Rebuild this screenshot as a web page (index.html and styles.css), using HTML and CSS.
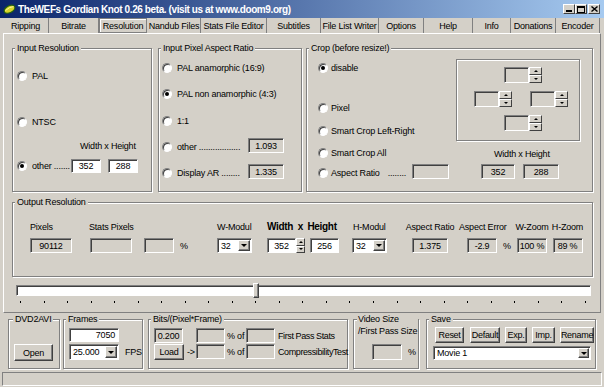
FILE: index.html
```html
<!DOCTYPE html>
<html lang="en">
<head>
    <meta charset="UTF-8">
    <meta name="viewport" content="width=device-width, initial-scale=1.0">
    <title>TheWEFs Gordian Knot</title>
    <link rel="stylesheet" href="styles.css">
</head>
<body>
<div class="window">
    <div class="titlebar">
        <svg class="app-icon" viewBox="0 0 13 12">
            <ellipse cx="6.5" cy="6.2" rx="5.8" ry="3.4" transform="rotate(-28 6.5 6.2)" fill="#d6d42a" stroke="#25600f" stroke-width="1.2"/>
            <path d="M2.5 7.5 Q6 4 10.5 3.6" stroke="#f6f4a0" stroke-width="1" fill="none"/>
        </svg>
        <span class="title">TheWEFs Gordian Knot 0.26 beta. (visit us at www.doom9.org)</span>
        <div class="caption-buttons">
            <span class="cap-btn"><svg width="6" height="6"><rect x="0" y="4" width="6" height="2" fill="#000"/></svg></span>
            <span class="cap-btn"><svg width="8" height="7"><rect x="0.5" y="0.5" width="7" height="6" fill="none" stroke="#000"/><rect x="0" y="0" width="8" height="2" fill="#000"/></svg></span>
            <span class="cap-btn close"><svg width="7" height="6"><path d="M0.5 0.5 L6.5 5.5 M6.5 0.5 L0.5 5.5" stroke="#000" stroke-width="1.4"/></svg></span>
        </div>
    </div>

    <div class="tabs">
        <span class="tab">Ripping</span>
        <span class="tab">Bitrate</span>
        <span class="tab active">Resolution</span>
        <span class="tab">Nandub Files</span>
        <span class="tab">Stats File Editor</span>
        <span class="tab">Subtitles</span>
        <span class="tab">File List Writer</span>
        <span class="tab">Options</span>
        <span class="tab">Help</span>
        <span class="tab">Info</span>
        <span class="tab">Donations</span>
        <span class="tab">Encoder</span>
    </div>

    <div class="page">
        <div class="top-row">
            <!-- input resolution -->
            <div class="group input-res">
                <div class="group-title">Input Resolution</div>
                <div class="row ir-pal"><span class="radio"></span>PAL</div>
                <div class="row ir-ntsc"><span class="radio"></span>NTSC</div>
                <div class="ir-label">Width x Height</div>
                <div class="row ir-other">
                    <span class="radio on"></span>
                    <span class="ir-other-text">other .......</span>
                    <span class="box edit ir-box">352</span>
                    <span class="box edit ir-box">288</span>
                </div>
            </div>

            <!-- input pixel aspect ratio -->
            <div class="group aspect">
                <div class="group-title">Input Pixel Aspect Ratio</div>
                <div class="row ar-1"><span class="radio"></span>PAL anamorphic (16:9)</div>
                <div class="row ar-2"><span class="radio on"></span>PAL non anamorphic (4:3)</div>
                <div class="row ar-3"><span class="radio"></span>1:1</div>
                <div class="row boxed ar-4">
                    <span class="radio-item"><span class="radio"></span>other ..................</span>
                    <span class="box sunken ar-box">1.093</span>
                </div>
                <div class="row boxed ar-5">
                    <span class="radio-item"><span class="radio"></span>Display AR ........</span>
                    <span class="box sunken ar-box">1.335</span>
                </div>
            </div>

            <!-- crop -->
            <div class="group crop">
                <div class="group-title">Crop (before resize!)</div>
                <div class="crop-body">
                    <div class="crop-left">
                        <div class="row cr-1"><span class="radio on"></span>disable</div>
                        <div class="row cr-2"><span class="radio"></span>Pixel</div>
                        <div class="row cr-3"><span class="radio"></span>Smart Crop Left-Right</div>
                        <div class="row cr-4"><span class="radio"></span>Smart Crop All</div>
                        <div class="row boxed cr-5">
                            <span class="radio-item"><span class="radio"></span>Aspect Ratio <span class="dots">........</span></span>
                            <span class="box sunken cr-box"></span>
                        </div>
                    </div>
                    <div class="crop-right">
                        <div class="crop-frame">
                            <div class="spinner sp-top"><span class="box sunken sp-field"></span><span class="spin"><span class="spin-btn up"></span><span class="spin-btn down"></span></span></div>
                            <div class="sp-mid">
                                <div class="spinner sp-left"><span class="box sunken sp-field"></span><span class="spin"><span class="spin-btn up"></span><span class="spin-btn down"></span></span></div>
                                <div class="spinner sp-right"><span class="box sunken sp-field"></span><span class="spin"><span class="spin-btn up"></span><span class="spin-btn down"></span></span></div>
                            </div>
                            <div class="spinner sp-bottom"><span class="box sunken sp-field"></span><span class="spin"><span class="spin-btn up"></span><span class="spin-btn down"></span></span></div>
                        </div>
                        <div class="crop-label">Width x Height</div>
                        <div class="crop-boxes">
                            <span class="box sunken cb-w">352</span>
                            <span class="box sunken cb-h">288</span>
                        </div>
                    </div>
                </div>
            </div>
        </div>

        <!-- output resolution -->
        <div class="group output">
            <div class="group-title">Output Resolution</div>
            <div class="out-row">
                <div class="cell c-pixels">
                    <span class="lbl">Pixels</span>
                    <div class="ctl"><span class="box sunken w42">90112</span></div>
                </div>
                <div class="cell c-stats">
                    <span class="lbl">Stats Pixels</span>
                    <div class="ctl"><span class="box sunken w42 ml1"></span></div>
                </div>
                <div class="cell c-pct">
                    <span class="lbl"></span>
                    <div class="ctl"><span class="box sunken w30"></span><span class="pct">%</span></div>
                </div>
                <div class="cell c-wmod">
                    <span class="lbl">W-Modul</span>
                    <div class="ctl">
                        <span class="combo w35"><span class="combo-text">32</span><span class="combo-btn"><i class="tri"></i></span></span>
                    </div>
                </div>
                <div class="cell c-wh">
                    <span class="lbl bold">Width x Height</span>
                    <div class="ctl">
                        <span class="box edit w29">352</span>
                        <span class="spin narrow"><span class="spin-btn up"></span><span class="spin-btn down"></span></span>
                        <span class="box edit w29 ml5">256</span>
                    </div>
                </div>
                <div class="cell c-hmod">
                    <span class="lbl ml1">H-Modul</span>
                    <div class="ctl">
                        <span class="combo w35"><span class="combo-text">32</span><span class="combo-btn"><i class="tri"></i></span></span>
                    </div>
                </div>
                <div class="cell c-ar center">
                    <span class="lbl">Aspect Ratio</span>
                    <div class="ctl"><span class="box sunken w36">1.375</span></div>
                </div>
                <div class="cell c-err">
                    <span class="lbl">Aspect Error</span>
                    <div class="ctl ml8"><span class="box sunken w30">-2.9</span><span class="pct">%</span></div>
                </div>
                <div class="cell c-wz center">
                    <span class="lbl">W-Zoom</span>
                    <div class="ctl"><span class="box sunken w30">100 %</span></div>
                </div>
                <div class="cell c-hz center">
                    <span class="lbl">H-Zoom</span>
                    <div class="ctl"><span class="box sunken w30">89 %</span></div>
                </div>
            </div>
        </div>

        <div class="slider">
            <span class="thumb"></span>
        </div>
        <div class="ticks">
            <i></i><i></i><i></i><i></i><i></i><i></i><i></i><i></i><i></i><i></i>
            <i></i><i></i><i></i><i></i><i></i><i></i><i></i><i></i><i></i><i></i>
            <i></i><i></i><i></i><i></i><i></i>
        </div>
    </div>

    <div class="bottom-row">
        <div class="group g-dvd">
            <div class="group-title">DVD2AVI</div>
            <span class="btn open-btn">Open</span>
        </div>
        <div class="group g-frames">
            <div class="group-title">Frames</div>
            <span class="box edit frames-box">7050</span>
            <div class="fps-row">
                <span class="combo fps-combo"><span class="combo-text">25.000</span><span class="combo-btn"><i class="tri"></i></span></span>
                <span>FPS</span>
            </div>
        </div>
        <div class="group g-bits">
            <div class="group-title">Bits/(Pixel*Frame)</div>
            <div class="bits-row first">
                <span class="box sunken bits-val">0.200</span>
                <span class="arrow"></span>
                <span class="box sunken w29"></span>
                <span class="pct-of">% of</span>
                <span class="box sunken w29"></span>
                <span class="bits-text">First Pass Stats</span>
            </div>
            <div class="bits-row">
                <span class="btn load-btn">Load</span>
                <span class="arrow">-&gt;</span>
                <span class="box sunken w29"></span>
                <span class="pct-of">% of</span>
                <span class="box sunken w29"></span>
                <span class="bits-text">CompressibilityTest</span>
            </div>
        </div>
        <div class="group g-vsize">
            <div class="group-title two-line">Video Size<br>/First Pass Size</div>
            <div class="vsize-row"><span class="box sunken w30 tall"></span><span>%</span></div>
        </div>
        <div class="group g-save">
            <div class="group-title">Save</div>
            <div class="save-buttons">
                <span class="btn b-reset">Reset</span>
                <span class="btn b-default">Default</span>
                <span class="btn b-exp">Exp.</span>
                <span class="btn b-imp">Imp.</span>
                <span class="btn b-rename">Rename</span>
            </div>
            <span class="combo save-combo"><span class="combo-text">Movie 1</span><span class="combo-btn"><i class="tri"></i></span></span>
        </div>
    </div>

    <div class="statusbar"></div>
</div>
</body>
</html>
```

FILE: styles.css
```css
* {
    box-sizing: border-box;
}

body {
    margin: 0;
    background-color: #d4d0c8;
    font-family: "Liberation Sans", Arial, sans-serif;
    font-size: 9px;
    letter-spacing: -0.2px;
    color: #000;
}

.window {
    width: 604px;
    height: 387px;
    display: flex;
    flex-direction: column;
    overflow: hidden;
}

/* title bar */
.titlebar {
    height: 18px;
    flex: none;
    display: flex;
    align-items: center;
    padding: 0 4px 0 3px;
    background: linear-gradient(to right, #0a246a, #a6caf0);
}

.app-icon {
    width: 13px;
    height: 12px;
    margin-right: 2px;
}

.title {
    color: #fff;
    font-weight: bold;
    font-size: 10px;
    letter-spacing: -0.4px;
    white-space: nowrap;
}

.caption-buttons {
    margin-left: auto;
    display: flex;
}

.cap-btn {
    width: 12px;
    height: 10px;
    background: #d4d0c8;
    border: 1px solid;
    border-color: #fff #404040 #404040 #fff;
    display: flex;
    align-items: center;
    justify-content: center;
}

.cap-btn.close {
    margin-left: 1px;
}

/* tabs */
.tabs {
    height: 15px;
    flex: none;
    display: flex;
    padding-left: 3px;
}

.tab {
    display: flex;
    align-items: center;
    justify-content: center;
    border-right: 1px solid #808080;
    white-space: nowrap;
}

.tab:nth-child(1) { width: 46px; }
.tab:nth-child(2) { width: 50px; }
.tab:nth-child(3) { width: 48px; }
.tab:nth-child(4) { width: 53px; }
.tab:nth-child(5) { width: 66px; }
.tab:nth-child(6) { width: 54px; }
.tab:nth-child(7) { width: 58px; }
.tab:nth-child(8) { width: 45px; }
.tab:nth-child(9) { width: 49px; }
.tab:nth-child(10) { width: 38px; }
.tab:nth-child(11) { width: 45px; }
.tab:nth-child(12) { width: 44px; }

.tab.active {
    border: 1px solid #808080;
    box-shadow: inset 1px 1px 0 #fff;
    margin-right: 1px;
}

/* page */
.page {
    flex: none;
    height: 280px;
    margin: 0 3px;
    border: 1px solid;
    border-color: #fff #808080 #808080 #fff;
}

.group {
    border: 1px solid #808080;
    box-shadow: 1px 1px 0 #fff, inset 1px 1px 0 #fff;
}

.group-title {
    width: fit-content;
    height: 12px;
    line-height: 12px;
    margin: -7px 0 0 2px;
    padding: 0 2px;
    background: #d4d0c8;
    white-space: nowrap;
}

.top-row {
    display: flex;
    margin: 14px 0 0 8px;
}

.row {
    display: flex;
    align-items: center;
    height: 14px;
    gap: 5px;
    white-space: nowrap;
}

.row.boxed {
    height: 15px;
    align-items: flex-end;
}

.radio-item {
    display: flex;
    align-items: center;
    gap: 5px;
    height: 12px;
}

.radio {
    width: 10px;
    height: 10px;
    flex: none;
    border-radius: 50%;
    background: #fff;
    border: 1px solid;
    border-color: #808080 #fff #fff #808080;
    box-shadow: inset 1px 1px 0 #404040;
    display: grid;
    place-items: center;
}

.radio.on::after {
    content: "";
    width: 4px;
    height: 4px;
    border-radius: 50%;
    background: #000;
}

/* boxes */
.box {
    display: flex;
    align-items: center;
    justify-content: center;
    height: 15px;
    flex: none;
    white-space: nowrap;
    border: 1px solid;
    border-color: #808080 #fff #fff #808080;
    box-shadow: inset 1px 1px 0 #404040;
}

.box.sunken {
    background: #d4d0c8;
}

.box.edit {
    background: #fff;
}

/* input resolution */
.input-res {
    width: 140px;
    height: 144px;
}

.input-res .row {
    padding-left: 4px;
}

.ir-pal { margin-top: 15px; }
.ir-ntsc { margin-top: 32px; }

.ir-label {
    height: 12px;
    line-height: 12px;
    margin: 11px 0 0 67px;
}

.ir-other {
    margin-top: 7px;
    gap: 0;
}

.ir-other .radio {
    margin-right: 5px;
}

.ir-other-text {
    width: 39px;
    flex: none;
    overflow: hidden;
}

.ir-box {
    width: 30px;
    height: 14px;
    margin-right: 7px;
}

/* aspect ratio */
.aspect {
    width: 144px;
    height: 144px;
    margin-left: 6px;
}

.aspect .row {
    padding: 0 17px 0 3px;
}

.ar-1 { margin-top: 7px; }
.ar-2 { margin-top: 12px; }
.ar-3 { margin-top: 13px; }
.ar-4 { margin-top: 10px; }
.ar-5 { margin-top: 11px; }

.ar-box {
    width: 36px;
    margin-left: auto;
}

/* crop */
.crop {
    width: 287px;
    height: 144px;
    margin-left: 4px;
}

.crop-body {
    display: flex;
}

.crop-left {
    width: 145px;
}

.crop-left .row,
.crop-left .radio-item {
    gap: 3px;
}

.crop-left .row {
    padding-left: 11px;
}

.cr-1 { margin-top: 7px; }
.cr-2 { margin-top: 26px; }
.cr-3 { margin-top: 9px; }
.cr-4 { margin-top: 8px; }
.cr-5 { margin-top: 4px; }

.dots {
    margin-left: 5px;
}

.cr-box {
    width: 37px;
    margin-left: auto;
    margin-right: 3px;
}

.crop-right {
    margin-left: 4px;
}

.crop-frame {
    width: 124px;
    height: 82px;
    margin-top: 5px;
    padding-top: 7px;
    border: 1px solid #808080;
    box-shadow: 1px 1px 0 #fff, inset 1px 1px 0 #fff;
}

.spinner {
    display: flex;
    width: 38px;
    height: 16px;
}

.sp-field {
    width: 25px;
    height: 16px;
}

.spin {
    display: flex;
    flex-direction: column;
    width: 13px;
}

.spin.narrow {
    width: 9px;
    height: 15px;
}

.spin-btn {
    flex: 1;
    display: grid;
    place-items: center;
    background: #d4d0c8;
    border: 1px solid;
    border-color: #fff #404040 #404040 #fff;
}

.spin-btn::after {
    content: "";
    border-left: 2px solid transparent;
    border-right: 2px solid transparent;
}

.spin-btn.up::after {
    border-bottom: 2px solid #000;
}

.spin-btn.down::after {
    border-top: 2px solid #000;
}

.sp-top,
.sp-bottom {
    margin-left: 47px;
}

.sp-mid {
    display: flex;
    margin-top: 8px;
}

.sp-left { margin-left: 17px; }
.sp-right { margin-left: 18px; }
.sp-bottom { margin-top: 8px; }

.crop-label {
    height: 12px;
    line-height: 12px;
    margin: 7px 0 0 38px;
}

.crop-boxes {
    display: flex;
    gap: 8px;
    margin: 4px 0 0 25px;
}

.cb-w { width: 34px; }
.cb-h { width: 36px; }

/* output resolution */
.output {
    width: 581px;
    height: 75px;
    margin: 10px 0 0 8px;
}

.out-row {
    display: flex;
    margin: 13px 0 0 17px;
}

.cell {
    display: flex;
    flex-direction: column;
}

.cell.center {
    align-items: center;
}

.lbl {
    height: 12px;
    line-height: 12px;
    white-space: nowrap;
}

.lbl.bold {
    font-weight: bold;
    font-size: 10px;
    letter-spacing: -0.3px;
    word-spacing: 2px;
}

.ctl {
    display: flex;
    align-items: center;
    margin-top: 5px;
    height: 15px;
}

.pct {
    margin-left: 6px;
}

.c-pixels { width: 42px; }
.c-stats { width: 44px; margin-left: 17px; }
.c-pct { width: 42px; margin-left: 11px; }
.c-wmod { width: 35px; margin-left: 31px; }
.c-wh { width: 72px; margin-left: 15px; }
.c-hmod { width: 35px; margin-left: 13px; }
.c-ar { width: 48px; margin-left: 19px; }
.c-err { width: 50px; margin-left: 5px; }
.c-wz { width: 34px; margin-left: 6px; }
.c-hz { width: 31px; margin-left: 3px; }

.w29 { width: 29px; }
.w30 { width: 30px; }
.w35 { width: 35px; }
.w36 { width: 36px; }
.w42 { width: 42px; }
.ml1 { margin-left: 1px; }
.ml5 { margin-left: 5px; }
.ml8 { margin-left: 8px; }

/* combo */
.combo {
    display: flex;
    height: 15px;
    flex: none;
    background: #fff;
    border: 1px solid;
    border-color: #808080 #fff #fff #808080;
    box-shadow: inset 1px 1px 0 #404040;
    padding: 1px;
}

.combo-text {
    flex: 1;
    display: flex;
    align-items: center;
    padding-left: 2px;
    white-space: nowrap;
}

.combo-btn {
    width: 12px;
    display: grid;
    place-items: center;
    background: #d4d0c8;
    border: 1px solid;
    border-color: #fff #404040 #404040 #fff;
    box-shadow: inset -1px -1px 0 #808080;
}

.tri {
    border-left: 3px solid transparent;
    border-right: 3px solid transparent;
    border-top: 3px solid #000;
}

/* slider */
.slider {
    position: relative;
    width: 575px;
    height: 11px;
    margin: 8px 0 0 12px;
    background: #fff;
    border: 1px solid;
    border-color: #808080 #fff #fff #808080;
    box-shadow: inset 1px 1px 0 #404040;
}

.thumb {
    position: absolute;
    left: 236px;
    top: -3px;
    width: 6px;
    height: 15px;
    background: #d4d0c8;
    border: 1px solid;
    border-color: #fff #404040 #404040 #fff;
    box-shadow: inset -1px -1px 0 #808080;
}

.ticks {
    display: flex;
    justify-content: space-between;
    width: 566px;
    margin: 5px 0 0 16px;
}

.ticks i {
    width: 1px;
    height: 2px;
    background: #000;
}

/* bottom groups */
.bottom-row {
    display: flex;
    margin: 6px 0 0 8px;
}

.bottom-row .group {
    height: 50px;
}

.g-dvd { width: 52px; }
.g-dvd .group-title { margin-left: 4px; }

.btn {
    display: flex;
    align-items: center;
    justify-content: center;
    flex: none;
    background: #d4d0c8;
    border: 1px solid;
    border-color: #fff #404040 #404040 #fff;
    box-shadow: inset -1px -1px 0 #808080;
    white-space: nowrap;
}

.open-btn {
    width: 39px;
    height: 17px;
    margin: 19px 0 0 5px;
}

.g-frames {
    width: 80px;
    margin-left: 3px;
}

.frames-box {
    width: 50px;
    height: 14px;
    margin: 3px 0 0 5px;
    justify-content: flex-end;
    padding-right: 3px;
}

.fps-row {
    display: flex;
    align-items: center;
    gap: 6px;
    margin: 2px 0 0 5px;
}

.fps-combo {
    width: 50px;
    height: 16px;
}

.g-bits {
    width: 200px;
    margin-left: 5px;
}

.bits-row {
    display: flex;
    align-items: center;
    height: 15px;
    margin: 1px 0 0 5px;
    white-space: nowrap;
}

.bits-row.first {
    margin-top: 3px;
}

.bits-val {
    width: 29px;
}

.load-btn {
    width: 30px;
    height: 16px;
}

.arrow {
    width: 13px;
    padding-left: 3px;
    flex: none;
}

.load-btn + .arrow {
    width: 12px;
}

.pct-of {
    width: 21px;
    padding-left: 2px;
    flex: none;
}

.bits-text {
    margin-left: 3px;
    letter-spacing: -0.4px;
}

.g-vsize {
    width: 66px;
    margin-left: 5px;
}

.two-line {
    height: 24px;
    margin-left: 3px;
    padding: 0 1px;
}

.vsize-row {
    display: flex;
    align-items: center;
    gap: 6px;
    margin: 7px 0 0 18px;
}

.box.tall {
    height: 16px;
}

.g-save {
    width: 170px;
    margin-left: 7px;
}

.save-buttons {
    display: flex;
    gap: 5px;
    margin: 2px 0 0 8px;
}

.save-buttons .btn {
    height: 16px;
    letter-spacing: -0.3px;
}

.b-reset { width: 29px; }
.b-default { width: 30px; margin-left: 1px; }
.b-exp { width: 22px; }
.b-imp { width: 23px; }
.b-rename { width: 34px; }

.save-combo {
    width: 158px;
    height: 14px;
    margin: 3px 0 0 6px;
}

.save-combo .combo-btn {
    width: 11px;
}

/* status bar */
.statusbar {
    height: 14px;
    margin: 3px 2px 0;
    border: 1px solid;
    border-color: #808080 #fff #fff #808080;
}
```
